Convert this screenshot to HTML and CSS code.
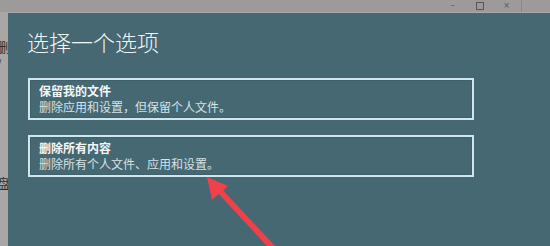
FILE: index.html
```html
<html>
    <head>
        <title>选择一个选项</title>
        <link rel="stylesheet" href="styles.css">
    </head>
    <body>
        <div class="titlebar">
            <span class="ctl">&ndash;</span>
            <span class="ctl ctl-max"></span>
            <span class="ctl">&times;</span>
            <span class="ctl-line"></span>
        </div>
        <div class="main">
            <div class="side">
                <span class="side-a">删</span>
                <span class="side-b">/</span>
                <span class="side-c">盘</span>
                <span class="side-d">,</span>
            </div>
            <div class="dialog">
                <h1 class="dialog-title">选择一个选项</h1>
                <div class="option">
                    <div class="option-name">保留我的文件</div>
                    <div class="option-desc">删除应用和设置，但保留个人文件。</div>
                </div>
                <div class="option">
                    <div class="option-name">删除所有内容</div>
                    <div class="option-desc">删除所有个人文件、应用和设置。</div>
                </div>
            </div>
        </div>
        <!-- red arrow pointing at second option -->
        <svg class="arrow" width="550" height="246" viewBox="0 0 550 246">
            <polygon points="216,191 220,187 275,246 267,246" fill="#f0404a"/>
            <polygon points="207,177 228,186 212,200" fill="#f0404a"/>
        </svg>
    </body>
</html>
```

FILE: styles.css
```css
* {
    padding: 0;
    margin: 0;
    box-sizing: border-box;
}

body {
    width: 550px;
    height: 246px;
    overflow: hidden;
    background: #a6a6a4;
    font-family: "Noto Sans CJK SC", "Noto Sans", sans-serif;
    position: relative;
}

.titlebar {
    height: 13px;
    background: #9c9b99;
    border-bottom: 1px solid #aaa9a7;
    display: flex;
    justify-content: flex-end;
    align-items: center;
    padding-right: 28px;
    color: #555;
    font-family: "DejaVu Sans", sans-serif;
    font-size: 8px;
}

.ctl {
    width: 27px;
    text-align: center;
    line-height: 10px;
}

.ctl-max {
    height: 10px;
    display: flex;
    justify-content: center;
    align-items: center;
}

.ctl-max::before {
    content: '';
    width: 6px;
    height: 6px;
    border: 1px solid #555;
}

.ctl-line {
    width: 1px;
    height: 12px;
    background: #888;
    margin-left: 1px;
}

.main {
    display: flex;
    height: 233px;
}

.side {
    width: 8px;
    position: relative;
    overflow: hidden;
    background: #a8a7a3;
    color: #2c2c2c;
    font-size: 13px;
}

.side span {
    position: absolute;
    left: -3px;
}

.side-a { top: 24px; }
.side-b { top: 42px; font-size: 11px; left: 1px; }
.side-c { top: 160px; left: -5px; }
.side-d { top: 185px; font-size: 10px; left: 2px; }

.dialog {
    flex: 1;
    background: #466873;
    padding: 13px 0 0 19px;
    color: #fff;
}

.dialog-title {
    font-size: 22px;
    font-weight: 300;
    line-height: 30px;
    margin-bottom: 22px;
    color: #f2f6f7;
}

.option {
    width: 446px;
    height: 42px;
    margin-left: 1px;
    margin-bottom: 15px;
    border: 2px solid #cfe6ec;
    box-shadow: inset 0 0 0 1px #3f5f69;
    padding: 3px 0 0 9px;
}

.option-name {
    font-size: 12px;
    font-weight: bold;
    line-height: 16px;
    color: #f4f7f8;
}

.option-desc {
    font-size: 12px;
    line-height: 16px;
    color: #d6e2e6;
}

.arrow {
    position: absolute;
    left: 0;
    top: 0;
}
```
